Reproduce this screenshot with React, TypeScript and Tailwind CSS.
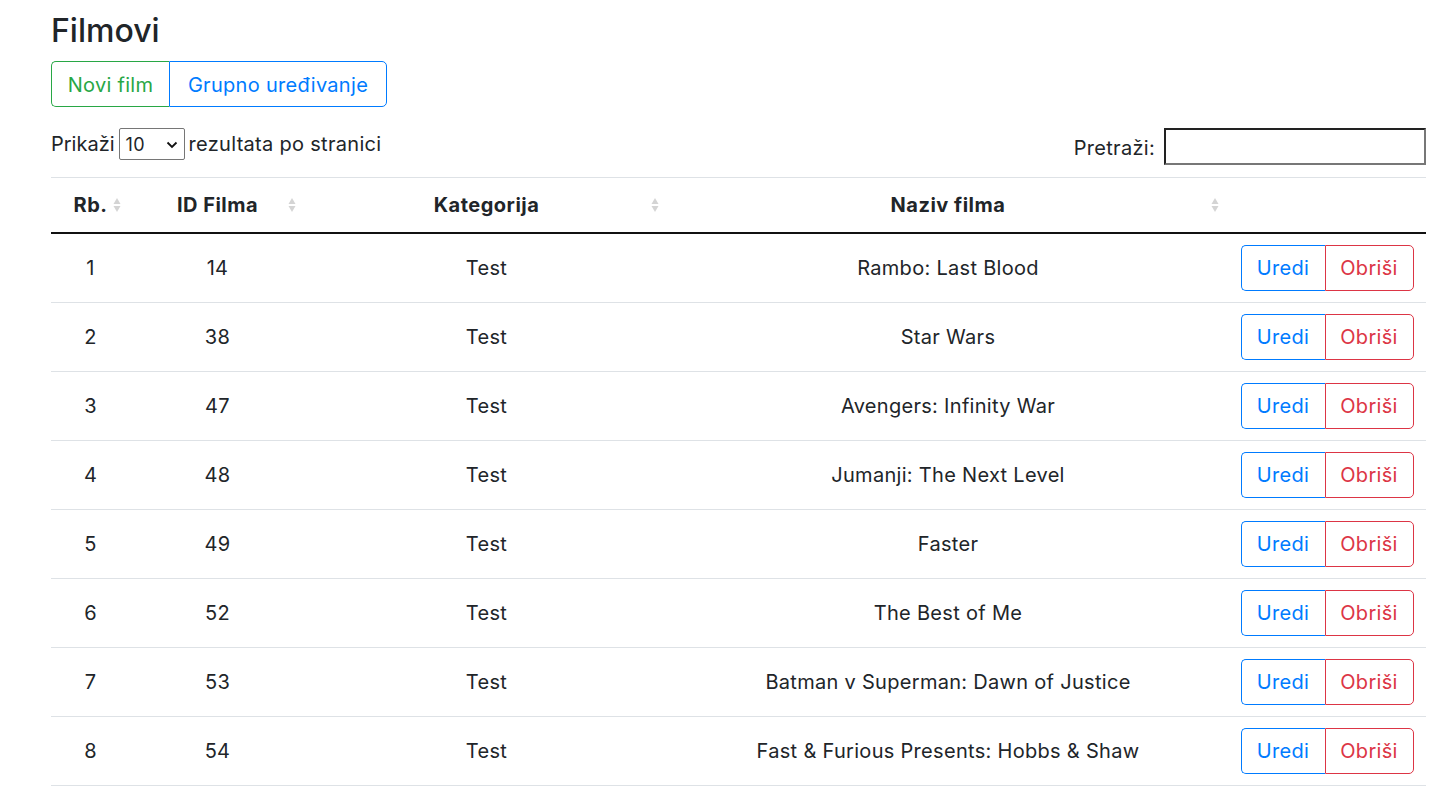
import React from "react";

type Film = {
  rb: number;
  id: number;
  kategorija: string;
  naziv: string;
};

const films: Film[] = [
  { rb: 1, id: 14, kategorija: "Test", naziv: "Rambo: Last Blood" },
  { rb: 2, id: 38, kategorija: "Test", naziv: "Star Wars" },
  { rb: 3, id: 47, kategorija: "Test", naziv: "Avengers: Infinity War" },
  { rb: 4, id: 48, kategorija: "Test", naziv: "Jumanji: The Next Level" },
  { rb: 5, id: 49, kategorija: "Test", naziv: "Faster" },
  { rb: 6, id: 52, kategorija: "Test", naziv: "The Best of Me" },
  { rb: 7, id: 53, kategorija: "Test", naziv: "Batman v Superman: Dawn of Justice" },
  { rb: 8, id: 54, kategorija: "Test", naziv: "Fast & Furious Presents: Hobbs & Shaw" },
];

function SortIcon() {
  return (
    <svg width="8" height="16" viewBox="0 0 8 16" className="absolute right-[9px] top-1/2 -translate-y-1/2">
      <path d="M4 1 L7.5 7 L0.5 7 Z" fill="#d4d4d4" />
      <path d="M4 15 L7.5 9 L0.5 9 Z" fill="#d4d4d4" />
    </svg>
  );
}

const cols = "grid grid-cols-[79px_175px_363px_560px_198px]";

export default function App() {
  return (
    <div className="min-h-screen bg-white text-[#212529] text-[20px] tracking-[0.3px]" style={{ fontFamily: "Inter, 'Noto Sans', sans-serif" }}>
      <div className="pl-[51px] w-[1426px]">
        <h3 className="pt-[12px] text-[32px] font-medium leading-[38px] tracking-normal">Filmovi</h3>

        {/* Button group */}
        <div className="mt-[11px] flex h-[46px]">
          <button className="w-[118px] border border-r-0 border-[#28a745] rounded-l-[5px] text-[#28a745] pt-[1px]">
            Novi film
          </button>
          <button className="w-[218px] border border-[#007bff] rounded-r-[5px] text-[#007bff] pt-[1px]">
            Grupno uređivanje
          </button>
        </div>

        {/* Controls */}
        <div className="mt-[21px] flex justify-between items-start h-[49px]">
          <div className="flex items-center gap-[4px] h-[32px]">
            <span className="tracking-normal">Prikaži</span>
            <div className="relative w-[66px] h-[32px] border border-[#767676] rounded-[2px] flex items-center pl-[6px]">
              <span className="text-[18px]">10</span>
              <svg width="12" height="8" viewBox="0 0 12 8" className="absolute right-[6px] top-[12px]">
                <path d="M1.5 1.5 L6 6 L10.5 1.5" stroke="#111" strokeWidth="1.8" fill="none" />
              </svg>
            </div>
            <span>rezultata po stranici</span>
          </div>
          <div className="flex items-center gap-[9px] h-[37px]">
            <span className="mt-[3px]">Pretraži:</span>
            <div className="w-[262px] h-[37px] border-2 border-t-[#222] border-l-[#222] border-b-[#777] border-r-[#777] bg-white" />
          </div>
        </div>

        {/* Table */}
        <div className="border-t border-[#dee2e6]">
          <div className={`${cols} h-[56px] border-b-2 border-[#111] font-bold tracking-[0.5px]`}>
            {["Rb.", "ID Filma", "Kategorija", "Naziv filma"].map((h) => (
              <div key={h} className="relative flex items-center justify-center">
                <span>{h}</span>
                <SortIcon />
              </div>
            ))}
            <div />
          </div>
          {films.map((f) => (
            <div key={f.rb} className={`${cols} h-[69px] border-b border-[#dee2e6]`}>
              <div className="flex items-center justify-center">{f.rb}</div>
              <div className="flex items-center justify-center">{f.id}</div>
              <div className="flex items-center justify-center">{f.kategorija}</div>
              <div className="flex items-center justify-center">{f.naziv}</div>
              <div className="flex items-start justify-center pt-[11px]">
                <div className="flex h-[46px]">
                  <button className="w-[84px] border border-r-0 border-[#007bff] rounded-l-[5px] text-[#007bff]">
                    Uredi
                  </button>
                  <button className="w-[89px] border border-[#dc3545] rounded-r-[5px] text-[#dc3545]">
                    Obriši
                  </button>
                </div>
              </div>
            </div>
          ))}
        </div>
      </div>
    </div>
  );
}
